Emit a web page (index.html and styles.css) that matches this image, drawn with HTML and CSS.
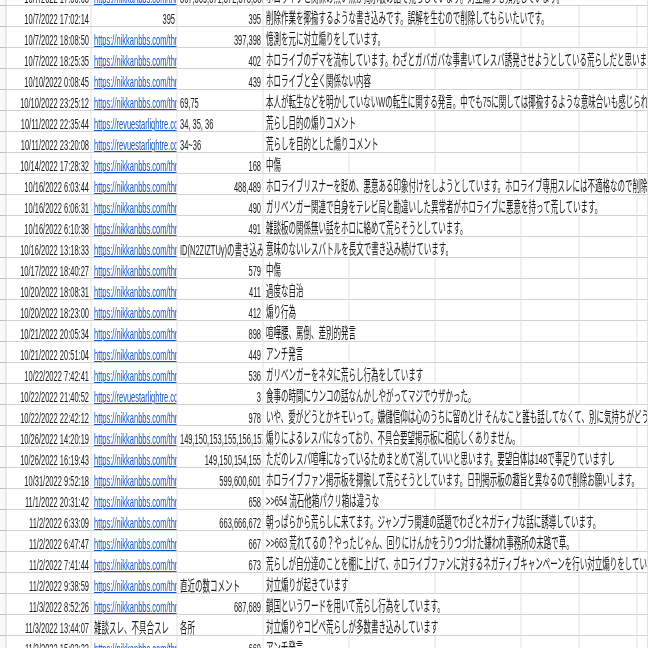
FILE: index.html
```html
<!DOCTYPE html>
<html lang="ja">
<head>
<meta charset="utf-8">
<title>Sheet</title>
<link rel="stylesheet" href="styles.css">
</head>
<body>
<div class="sheet">
<div class="row"><div class="h"></div><div class="c d">10/7/2022 17:00:03</div><div class="c"><a>https://nikkanbbs.com/thread/read</a></div><div class="c">367,369,371,372,373,380,381</div><div class="c t s6">ホロライブと関係の無い点が掲示板の話で荒らしています。対立煽りも頻発しています。</div></div>
<div class="row"><div class="h"></div><div class="c d">10/7/2022 17:02:14</div><div class="c r">395</div><div class="c r">395</div><div class="c t s4">削除作業を揶揄するような書き込みです。誤解を生むので削除してもらいたいです。</div><div class="c"></div><div class="c"></div></div>
<div class="row"><div class="h"></div><div class="c d">10/7/2022 18:08:50</div><div class="c"><a>https://nikkanbbs.com/thread/read</a></div><div class="c r">397,398</div><div class="c t s2">憶測を元に対立煽りをしています。</div><div class="c"></div><div class="c"></div><div class="c"></div><div class="c"></div></div>
<div class="row"><div class="h"></div><div class="c d">10/7/2022 18:25:35</div><div class="c"><a>https://nikkanbbs.com/thread/read</a></div><div class="c r">402</div><div class="c t s6">ホロライブのデマを流布しています。わざとガバガバな事書いてレスバ誘発させようとしている荒らしだと思います。</div></div>
<div class="row"><div class="h"></div><div class="c d">10/10/2022 0:08:45</div><div class="c"><a>https://nikkanbbs.com/thread/read</a></div><div class="c r">439</div><div class="c t s2">ホロライブと全く関係ない内容</div><div class="c"></div><div class="c"></div><div class="c"></div><div class="c"></div></div>
<div class="row"><div class="h"></div><div class="c d">10/10/2022 23:25:12</div><div class="c"><a>https://nikkanbbs.com/thread/read</a></div><div class="c">69,75</div><div class="c t s6">本人が転生などを明かしていないWの転生に関する発言。中でも75に関しては揶揄するような意味合いも感じられます。</div></div>
<div class="row"><div class="h"></div><div class="c d">10/11/2022 22:35:44</div><div class="c"><a>https://revuestarlightre.com/thread</a></div><div class="c">34, 35, 36</div><div class="c t s2">荒らし目的の煽りコメント</div><div class="c"></div><div class="c"></div><div class="c"></div><div class="c"></div></div>
<div class="row"><div class="h"></div><div class="c d">10/11/2022 23:20:08</div><div class="c"><a>https://revuestarlightre.com/thread</a></div><div class="c">34~36</div><div class="c t s2">荒らしを目的とした煽りコメント</div><div class="c"></div><div class="c"></div><div class="c"></div><div class="c"></div></div>
<div class="row"><div class="h"></div><div class="c d">10/14/2022 17:28:32</div><div class="c"><a>https://nikkanbbs.com/thread/read</a></div><div class="c r">168</div><div class="c t s1">中傷</div><div class="c"></div><div class="c"></div><div class="c"></div><div class="c"></div><div class="c"></div></div>
<div class="row"><div class="h"></div><div class="c d">10/16/2022 6:03:44</div><div class="c"><a>https://nikkanbbs.com/thread/read</a></div><div class="c r">488,489</div><div class="c t s6">ホロライブリスナーを貶め、悪意ある印象付けをしようとしています。ホロライブ専用スレには不適格なので削除お願いします。</div></div>
<div class="row"><div class="h"></div><div class="c d">10/16/2022 6:06:31</div><div class="c"><a>https://nikkanbbs.com/thread/read</a></div><div class="c r">490</div><div class="c t s5">ガリベンガー関連で自身をテレビ局と勘違いした異常者がホロライブに悪意を持って荒しています。</div><div class="c"></div></div>
<div class="row"><div class="h"></div><div class="c d">10/16/2022 6:10:38</div><div class="c"><a>https://nikkanbbs.com/thread/read</a></div><div class="c r">491</div><div class="c t s3">雑談板の関係無い話をホロに絡めて荒らそうとしています。</div><div class="c"></div><div class="c"></div><div class="c"></div></div>
<div class="row"><div class="h"></div><div class="c d">10/16/2022 13:18:33</div><div class="c"><a>https://nikkanbbs.com/thread/read</a></div><div class="c">ID(N2ZIZTUy)の書き込み</div><div class="c t s3">意味のないレスバトルを長文で書き込み続けています。</div><div class="c"></div><div class="c"></div><div class="c"></div></div>
<div class="row"><div class="h"></div><div class="c d">10/17/2022 18:40:27</div><div class="c"><a>https://nikkanbbs.com/thread/read</a></div><div class="c r">579</div><div class="c t s1">中傷</div><div class="c"></div><div class="c"></div><div class="c"></div><div class="c"></div><div class="c"></div></div>
<div class="row"><div class="h"></div><div class="c d">10/20/2022 18:08:31</div><div class="c"><a>https://nikkanbbs.com/thread/read</a></div><div class="c r">411</div><div class="c t s1">過度な自治</div><div class="c"></div><div class="c"></div><div class="c"></div><div class="c"></div><div class="c"></div></div>
<div class="row"><div class="h"></div><div class="c d">10/20/2022 18:23:00</div><div class="c"><a>https://nikkanbbs.com/thread/read</a></div><div class="c r">412</div><div class="c t s1">煽り行為</div><div class="c"></div><div class="c"></div><div class="c"></div><div class="c"></div><div class="c"></div></div>
<div class="row"><div class="h"></div><div class="c d">10/21/2022 20:05:34</div><div class="c"><a>https://nikkanbbs.com/thread/read</a></div><div class="c r">898</div><div class="c t s2">喧嘩腰、罵倒、差別的発言</div><div class="c"></div><div class="c"></div><div class="c"></div><div class="c"></div></div>
<div class="row"><div class="h"></div><div class="c d">10/21/2022 20:51:04</div><div class="c"><a>https://nikkanbbs.com/thread/read</a></div><div class="c r">449</div><div class="c t s1">アンチ発言</div><div class="c"></div><div class="c"></div><div class="c"></div><div class="c"></div><div class="c"></div></div>
<div class="row"><div class="h"></div><div class="c d">10/22/2022 7:42:41</div><div class="c"><a>https://nikkanbbs.com/thread/read</a></div><div class="c r">536</div><div class="c t s2">ガリベンガーをネタに荒らし行為をしています</div><div class="c"></div><div class="c"></div><div class="c"></div><div class="c"></div></div>
<div class="row"><div class="h"></div><div class="c d">10/22/2022 21:40:52</div><div class="c"><a>https://revuestarlightre.com/thread</a></div><div class="c r">3</div><div class="c t s3">食事の時間にウンコの話なんかしやがってマジでウザかった。</div><div class="c"></div><div class="c"></div><div class="c"></div></div>
<div class="row"><div class="h"></div><div class="c d">10/22/2022 22:42:12</div><div class="c"><a>https://nikkanbbs.com/thread/read</a></div><div class="c r">978</div><div class="c t s6">いや、愛がどうとかキモいって。嫌儲信仰は心のうちに留めとけ そんなこと誰も話してなくて、別に気持ちがどうとか</div></div>
<div class="row"><div class="h"></div><div class="c d">10/26/2022 14:20:19</div><div class="c"><a>https://nikkanbbs.com/thread/read</a></div><div class="c">149,150,153,155,156,157,158</div><div class="c t s3">煽りによるレスバになっており、不具合要望掲示板に相応しくありません。</div><div class="c"></div><div class="c"></div><div class="c"></div></div>
<div class="row"><div class="h"></div><div class="c d">10/26/2022 16:19:43</div><div class="c"><a>https://nikkanbbs.com/thread/read</a></div><div class="c r">149,150,154,155</div><div class="c t s5">ただのレスバ喧嘩になっているためまとめて消していいと思います。要望自体は148で事足りていますし</div><div class="c"></div></div>
<div class="row"><div class="h"></div><div class="c d">10/31/2022 9:52:18</div><div class="c"><a>https://nikkanbbs.com/thread/read</a></div><div class="c r">599,600,601</div><div class="c t s6">ホロライブファン掲示板を揶揄して荒らそうとしています。日刊掲示板の趣旨と異なるので削除お願いします。</div></div>
<div class="row"><div class="h"></div><div class="c d">11/1/2022 20:31:42</div><div class="c"><a>https://nikkanbbs.com/thread/read</a></div><div class="c r">658</div><div class="c t s2">&gt;&gt;654 流石他箱パクリ箱は違うな</div><div class="c"></div><div class="c"></div><div class="c"></div><div class="c"></div></div>
<div class="row"><div class="h"></div><div class="c d">11/2/2022 6:33:09</div><div class="c"><a>https://nikkanbbs.com/thread/read</a></div><div class="c r">663,666,672</div><div class="c t s5">朝っぱらから荒らしに来てます。ジャンプラ関連の話題でわざとネガティブな話に誘導しています。</div><div class="c"></div></div>
<div class="row"><div class="h"></div><div class="c d">11/2/2022 6:47:47</div><div class="c"><a>https://nikkanbbs.com/thread/read</a></div><div class="c r">667</div><div class="c t s4">&gt;&gt;663 荒れてるの？やったじゃん、回りにけんかをうりつづけた嫌われ事務所の末路で草。</div><div class="c"></div><div class="c"></div></div>
<div class="row"><div class="h"></div><div class="c d">11/2/2022 7:41:44</div><div class="c"><a>https://nikkanbbs.com/thread/read</a></div><div class="c r">673</div><div class="c t s6">荒らしが自分達のことを棚に上げて、ホロライブファンに対するネガティブキャンペーンを行い対立煽りをしています。</div></div>
<div class="row"><div class="h"></div><div class="c d">11/2/2022 9:38:59</div><div class="c"><a>https://nikkanbbs.com/thread/read</a></div><div class="c">直近の数コメント</div><div class="c t s1">対立煽りが起きています</div><div class="c"></div><div class="c"></div><div class="c"></div><div class="c"></div><div class="c"></div></div>
<div class="row"><div class="h"></div><div class="c d">11/3/2022 8:52:26</div><div class="c"><a>https://nikkanbbs.com/thread/read</a></div><div class="c r">687,689</div><div class="c t s3">鎖国というワードを用いて荒らし行為をしています。</div><div class="c"></div><div class="c"></div><div class="c"></div></div>
<div class="row"><div class="h"></div><div class="c d">11/3/2022 13:44:07</div><div class="c">雑談スレ、不具合スレ</div><div class="c">各所</div><div class="c t s3">対立煽りやコピペ荒らしが多数書き込みしています</div><div class="c"></div><div class="c"></div><div class="c"></div></div>
<div class="row"><div class="h"></div><div class="c d">11/3/2022 15:03:33</div><div class="c"><a>https://nikkanbbs.com/thread/read</a></div><div class="c r">669</div><div class="c t s1">アンチ発言</div><div class="c"></div><div class="c"></div><div class="c"></div><div class="c"></div><div class="c"></div></div>
</div>
</body>
</html>
```
FILE: styles.css
```css
html, body {
  margin: 0;
  width: 648px;
  height: 648px;
  overflow: hidden;
  background: #fff;
}

/* The reference is squeezed horizontally to half width, so lay out at double width */
.sheet {
  width: 1296px;
  margin-top: -15px;
  transform: scaleX(0.5);
  transform-origin: 0 0;
  filter: blur(0.4px);
  font-family: "Liberation Sans", "Noto Sans CJK JP", sans-serif;
  font-size: 15px;
  color: #1a1a1a;
}

.row {
  display: grid;
  grid-template-columns: 13px 170px 172px 172px 172px 172px 172px 116px 116px 1fr;
  height: 21px;
}

.h {
  background: #f8f9fa;
  border-right: 2px solid #d4d4d4;
  border-bottom: 1px solid #c0c0c0;
}

.c {
  min-width: 0;
  box-sizing: border-box;
  height: 21px;
  padding: 3.5px 5px 0;
  line-height: 17px;
  white-space: nowrap;
  overflow: hidden;
  border-right: 2px solid #e4e4e4;
  border-bottom: 1px solid #d2d2d2;
}

.d, .r {
  text-align: right;
  padding-right: 3px;
}

.t {
  font-size: 15px;
  padding-top: 2.5px;
}

a {
  color: #1155cc;
  text-decoration: underline;
  text-decoration-thickness: 1px;
}

.s1 { grid-column: span 1; }
.s2 { grid-column: span 2; }
.s3 { grid-column: span 3; }
.s4 { grid-column: span 4; }
.s5 { grid-column: span 5; }
.s6 { grid-column: span 6; }
```
